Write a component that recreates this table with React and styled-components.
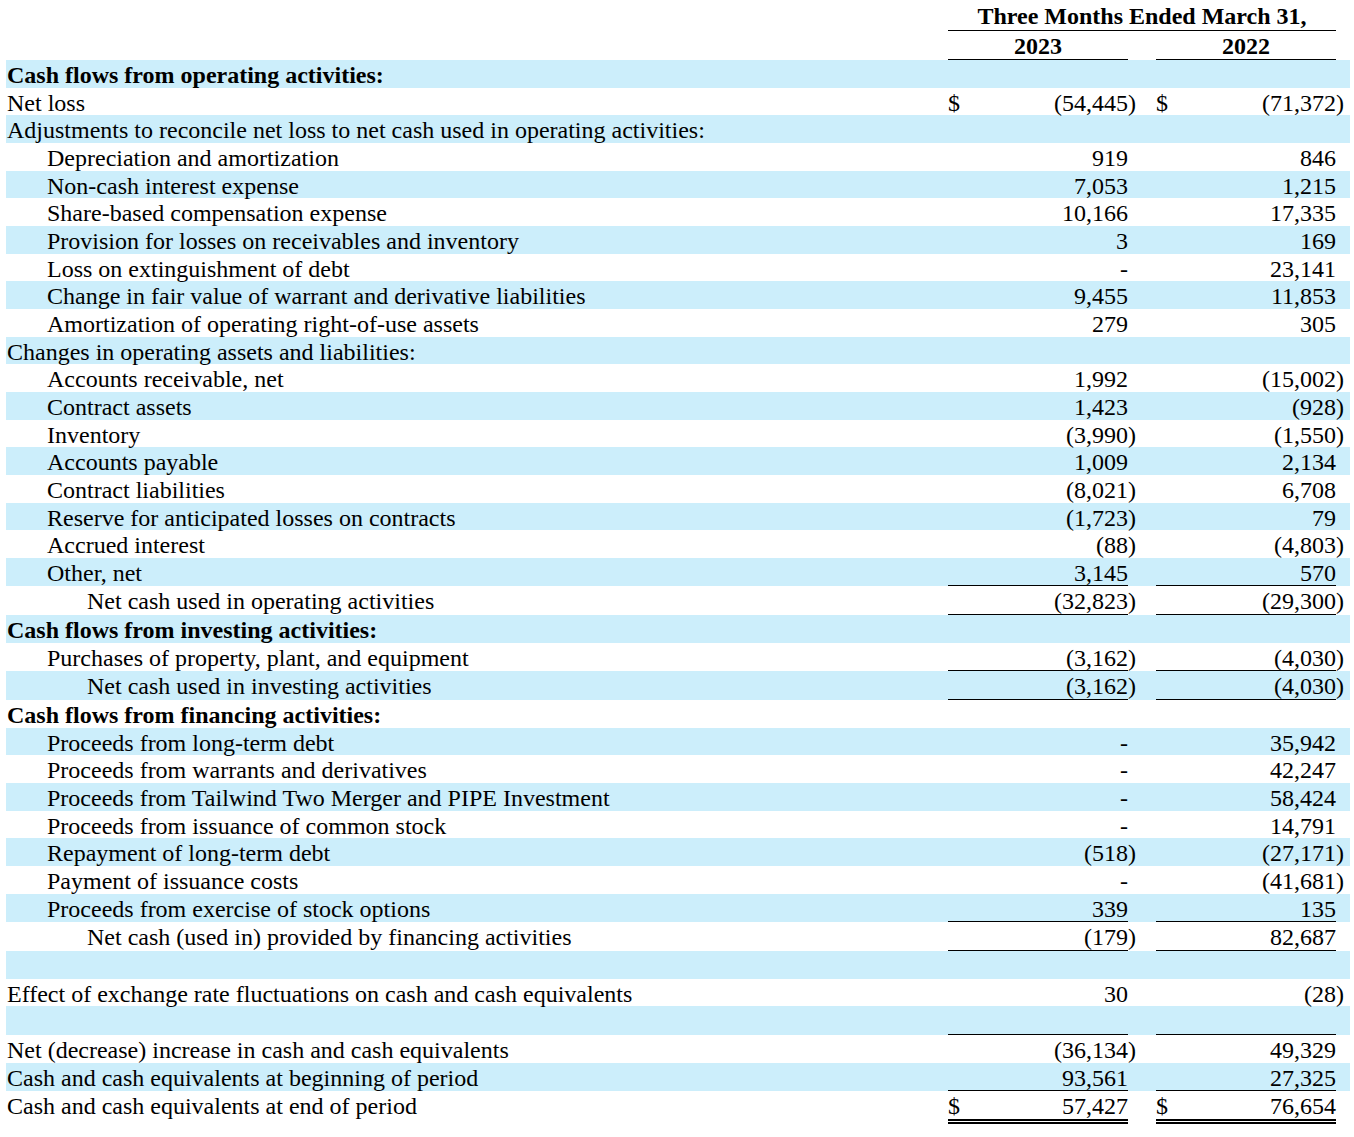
import styled, { createGlobalStyle } from "styled-components";

const GlobalStyle = createGlobalStyle`
  body {
    margin: 0;
    background: #fff;
    color: #000;
    font-family: "Liberation Serif", "Times New Roman", serif;
    font-size: 24px;
  }
`;

// label | 2023 | gap | 2022 | tail
const COLS = "942px 180px 28px 180px 14px";

const Statement = styled.div`
  width: 1344px;
  margin-left: 6px;
`;

const HeadRow = styled.div`
  display: grid;
  grid-template-columns: ${COLS};
`;

const PeriodTitle = styled.div`
  grid-column: 2 / 5;
  text-align: center;
  font-weight: bold;
  padding-top: 2px;
  line-height: 28px;
  border-bottom: 1px solid #000;
`;

const Year = styled.div`
  grid-column: ${(p) => p.$col};
  text-align: center;
  font-weight: bold;
  padding-top: 2px;
  line-height: 26px;
  border-bottom: 1px solid #000;
`;

const Row = styled.div`
  display: grid;
  grid-template-columns: ${COLS};
  line-height: 24.65px;
  background: ${(p) => (p.$shaded ? "#cceefb" : "transparent")};
`;

const Label = styled.div`
  grid-column: 1;
  min-height: 24.65px;
  padding-top: 3px;
  padding-left: ${(p) => 1 + p.$indent * 40}px;
  font-weight: ${(p) => (p.$bold ? "bold" : "normal")};
  white-space: nowrap;
`;

const Amount = styled.div`
  grid-column: ${(p) => p.$col};
  min-height: 24.65px;
  padding-top: 3px;
  display: flex;
  justify-content: space-between;
  white-space: nowrap;
  border-bottom: ${(p) =>
    p.$rule === "double"
      ? "5px double #000"
      : p.$rule === "single"
      ? "1px solid #000"
      : "none"};
`;

const Num = styled.span`
  margin-left: auto;
`;

const Hang = styled.span`
  margin-right: -8px;
`;

const rows = [
  { label: "Cash flows from operating activities:", bold: true },
  { label: "Net loss", a: "(54,445)", b: "(71,372)", dollar: true },
  { label: "Adjustments to reconcile net loss to net cash used in operating activities:" },
  { label: "Depreciation and amortization", indent: 1, a: "919", b: "846" },
  { label: "Non-cash interest expense", indent: 1, a: "7,053", b: "1,215" },
  { label: "Share-based compensation expense", indent: 1, a: "10,166", b: "17,335" },
  { label: "Provision for losses on receivables and inventory", indent: 1, a: "3", b: "169" },
  { label: "Loss on extinguishment of debt", indent: 1, a: "-", b: "23,141" },
  { label: "Change in fair value of warrant and derivative liabilities", indent: 1, a: "9,455", b: "11,853" },
  { label: "Amortization of operating right-of-use assets", indent: 1, a: "279", b: "305" },
  { label: "Changes in operating assets and liabilities:" },
  { label: "Accounts receivable, net", indent: 1, a: "1,992", b: "(15,002)" },
  { label: "Contract assets", indent: 1, a: "1,423", b: "(928)" },
  { label: "Inventory", indent: 1, a: "(3,990)", b: "(1,550)" },
  { label: "Accounts payable", indent: 1, a: "1,009", b: "2,134" },
  { label: "Contract liabilities", indent: 1, a: "(8,021)", b: "6,708" },
  { label: "Reserve for anticipated losses on contracts", indent: 1, a: "(1,723)", b: "79" },
  { label: "Accrued interest", indent: 1, a: "(88)", b: "(4,803)" },
  { label: "Other, net", indent: 1, a: "3,145", b: "570", rule: "single" },
  { label: "Net cash used in operating activities", indent: 2, a: "(32,823)", b: "(29,300)", rule: "single" },
  { label: "Cash flows from investing activities:", bold: true },
  { label: "Purchases of property, plant, and equipment", indent: 1, a: "(3,162)", b: "(4,030)", rule: "single" },
  { label: "Net cash used in investing activities", indent: 2, a: "(3,162)", b: "(4,030)", rule: "single" },
  { label: "Cash flows from financing activities:", bold: true },
  { label: "Proceeds from long-term debt", indent: 1, a: "-", b: "35,942" },
  { label: "Proceeds from warrants and derivatives", indent: 1, a: "-", b: "42,247" },
  { label: "Proceeds from Tailwind Two Merger and PIPE Investment", indent: 1, a: "-", b: "58,424" },
  { label: "Proceeds from issuance of common stock", indent: 1, a: "-", b: "14,791" },
  { label: "Repayment of long-term debt", indent: 1, a: "(518)", b: "(27,171)" },
  { label: "Payment of issuance costs", indent: 1, a: "-", b: "(41,681)" },
  { label: "Proceeds from exercise of stock options", indent: 1, a: "339", b: "135", rule: "single" },
  { label: "Net cash (used in) provided by financing activities", indent: 2, a: "(179)", b: "82,687", rule: "single" },
  { label: "" },
  { label: "Effect of exchange rate fluctuations on cash and cash equivalents", a: "30", b: "(28)" },
  { label: "", rule: "single" },
  { label: "Net (decrease) increase in cash and cash equivalents", a: "(36,134)", b: "49,329" },
  { label: "Cash and cash equivalents at beginning of period", a: "93,561", b: "27,325", rule: "single" },
  { label: "Cash and cash equivalents at end of period", a: "57,427", b: "76,654", dollar: true, rule: "double" },
];

function Figure({ value }) {
  if (!value) return null;
  if (value.endsWith(")")) {
    return (
      <Num>
        {value.slice(0, -1)}
        <Hang>)</Hang>
      </Num>
    );
  }
  return <Num>{value}</Num>;
}

export default function App() {
  return (
    <>
      <GlobalStyle />
      <Statement>
        <HeadRow>
          <PeriodTitle>Three Months Ended March 31,</PeriodTitle>
        </HeadRow>
        <HeadRow>
          <Year $col={2}>2023</Year>
          <Year $col={4}>2022</Year>
        </HeadRow>
        {rows.map((r, i) => (
          <Row key={i} $shaded={i % 2 === 0}>
            <Label $indent={r.indent || 0} $bold={r.bold}>
              {r.label}
            </Label>
            <Amount $col={2} $rule={r.rule}>
              {r.dollar && <span>$</span>}
              <Figure value={r.a} />
            </Amount>
            <Amount $col={4} $rule={r.rule}>
              {r.dollar && <span>$</span>}
              <Figure value={r.b} />
            </Amount>
          </Row>
        ))}
      </Statement>
    </>
  );
}
